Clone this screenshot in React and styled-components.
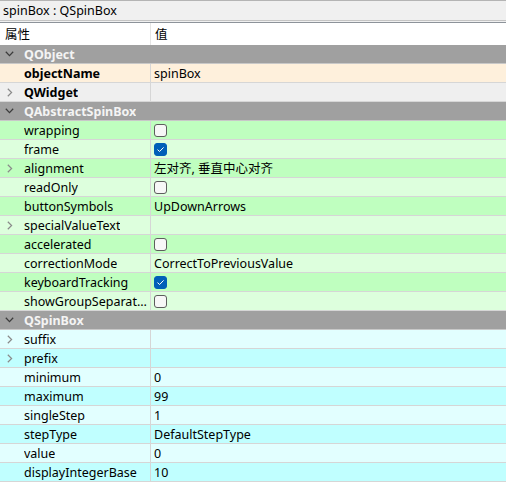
import React from "react";
import styled, { createGlobalStyle } from "styled-components";

const Global = createGlobalStyle`
  html, body { margin: 0; padding: 0; background: #ffffff; overflow: hidden; }
  body { font-family: "Noto Sans", "Noto Sans CJK SC", sans-serif; font-size: 12.5px; color: #000; }
`;

const Panel = styled.div`
  width: 506px;
  height: 482px;
  display: flex;
  flex-direction: column;
  overflow: hidden;
  background: #ffffff;
`;

const TitleBar = styled.div`
  height: 19px;
  border-top: 1px solid #b4b4b4;
  border-bottom: 1px solid #c4c4c4;
  background: #f0f0f0;
  display: flex;
  align-items: center;
  padding-left: 3px;
  line-height: 19px;
`;

const Gap = styled.div`
  height: 1px;
  background: #f0f0f0;
  border-bottom: 1px solid #8d939a;
`;

const Header = styled.div`
  display: flex;
  height: 23px;
  background: #ffffff;
`;

const HeaderCell = styled.div`
  display: flex;
  align-items: center;
  padding-left: ${(p) => p.$pad}px;
  width: ${(p) => (p.$w ? `${p.$w}px` : "auto")};
  flex: ${(p) => (p.$w ? "none" : "1")};
  border-right: ${(p) => (p.$w ? "1px solid #e5e5e5" : "none")};
  box-sizing: border-box;
`;

const Row = styled.div`
  display: flex;
  height: 18px;
  border-bottom: 1px solid #d6d6d6;
  background: ${(p) => p.$bg};
  line-height: 18px;
`;

const NameCell = styled.div`
  width: 151px;
  flex: none;
  box-sizing: border-box;
  border-right: 1px solid #d6d6d6;
  display: flex;
  align-items: center;
  padding-right: 3px;
  overflow: hidden;
`;

const ArrowSlot = styled.div`
  width: 24px;
  flex: none;
  display: flex;
  align-items: center;
  padding-left: ${(p) => (p.$down ? 5 : 7)}px;
  box-sizing: border-box;
  height: 18px;
`;

const NameText = styled.span`
  white-space: nowrap;
  overflow: hidden;
  text-overflow: ellipsis;
  padding-top: 1px;
  font-weight: ${(p) => (p.$bold ? 700 : 400)};
  color: ${(p) => p.$color || "#000"};
`;

const ValueCell = styled.div`
  flex: 1;
  display: flex;
  align-items: center;
  padding-left: 3px;
  padding-top: 1px;
  white-space: nowrap;
  overflow: hidden;
`;

const GroupRow = styled.div`
  display: flex;
  align-items: center;
  height: 18px;
  border-bottom: 1px solid #c8c8c8;
  background: #a0a0a0;
`;

const Box = styled.span`
  width: 13px;
  height: 13px;
  box-sizing: border-box;
  border-radius: 3px;
  margin-top: -1px;
  border: 1px solid ${(p) => (p.$on ? "#005fb8" : "#5d5d5d")};
  background: ${(p) => (p.$on ? "#005fb8" : "#f7f7f7")};
  display: flex;
  align-items: center;
  justify-content: center;
`;

const DownChevron = () => (
  <svg width="9" height="6" viewBox="0 0 9 6">
    <path d="M0.8 0.8 L4.5 4.6 L8.2 0.8" fill="none" stroke="#3c3c3c" strokeWidth="1.3" />
  </svg>
);

const RightChevron = () => (
  <svg width="6" height="9" viewBox="0 0 6 9">
    <path d="M0.8 0.8 L4.6 4.5 L0.8 8.2" fill="none" stroke="#8a8a8a" strokeWidth="1.2" />
  </svg>
);

const Check = ({ on }) => (
  <Box $on={on}>
    {on && (
      <svg width="9" height="7" viewBox="0 0 9 7">
        <path d="M1.5 3.6 L3.6 5.5 L7.6 1.4" fill="none" stroke="#ffffff" strokeWidth="1" />
      </svg>
    )}
  </Box>
);

const DARK = {
  green: "#bfffbf",
  cyan: "#c0ffff",
};
const LIGHT = {
  green: "#ddffdd",
  cyan: "#e2ffff",
};

const items = [
  { type: "group", name: "QObject" },
  { name: "objectName", value: "spinBox", bold: true, bg: "#fef0dc" },
  { name: "QWidget", bold: true, collapsed: true, bg: "#efefef" },
  { type: "group", name: "QAbstractSpinBox" },
  { name: "wrapping", check: false, c: "green" },
  { name: "frame", check: true, c: "green" },
  { name: "alignment", value: "左对齐, 垂直中心对齐", collapsed: true, c: "green" },
  { name: "readOnly", check: false, c: "green" },
  { name: "buttonSymbols", value: "UpDownArrows", c: "green" },
  { name: "specialValueText", value: "", collapsed: true, c: "green" },
  { name: "accelerated", check: false, c: "green" },
  { name: "correctionMode", value: "CorrectToPreviousValue", c: "green" },
  { name: "keyboardTracking", check: true, c: "green" },
  { name: "showGroupSeparator", check: false, c: "green" },
  { type: "group", name: "QSpinBox" },
  { name: "suffix", value: "", collapsed: true, c: "cyan" },
  { name: "prefix", value: "", collapsed: true, c: "cyan" },
  { name: "minimum", value: "0", c: "cyan" },
  { name: "maximum", value: "99", c: "cyan" },
  { name: "singleStep", value: "1", c: "cyan" },
  { name: "stepType", value: "DefaultStepType", c: "cyan" },
  { name: "value", value: "0", c: "cyan" },
  { name: "displayIntegerBase", value: "10", c: "cyan" },
];

export default function App() {
  return (
    <>
      <Global />
      <Panel>
        <TitleBar>spinBox : QSpinBox</TitleBar>
        <Gap />
        <Header>
          <HeaderCell $w={151} $pad={5}>属性</HeaderCell>
          <HeaderCell $pad={4}>值</HeaderCell>
        </Header>
        {items.map((it, i) => {
          if (it.type === "group") {
            return (
              <GroupRow key={it.name}>
                <ArrowSlot $down>
                  <DownChevron />
                </ArrowSlot>
                <NameText $bold $color="#f4f4f4">{it.name}</NameText>
              </GroupRow>
            );
          }
          const bg = it.bg || (i % 2 === 0 ? DARK[it.c] : LIGHT[it.c]);
          return (
            <Row key={it.name} $bg={bg}>
              <NameCell>
                <ArrowSlot>{it.collapsed && <RightChevron />}</ArrowSlot>
                <NameText $bold={it.bold}>{it.name}</NameText>
              </NameCell>
              <ValueCell>
                {it.check !== undefined ? <Check on={it.check} /> : it.value}
              </ValueCell>
            </Row>
          );
        })}
      </Panel>
    </>
  );
}
